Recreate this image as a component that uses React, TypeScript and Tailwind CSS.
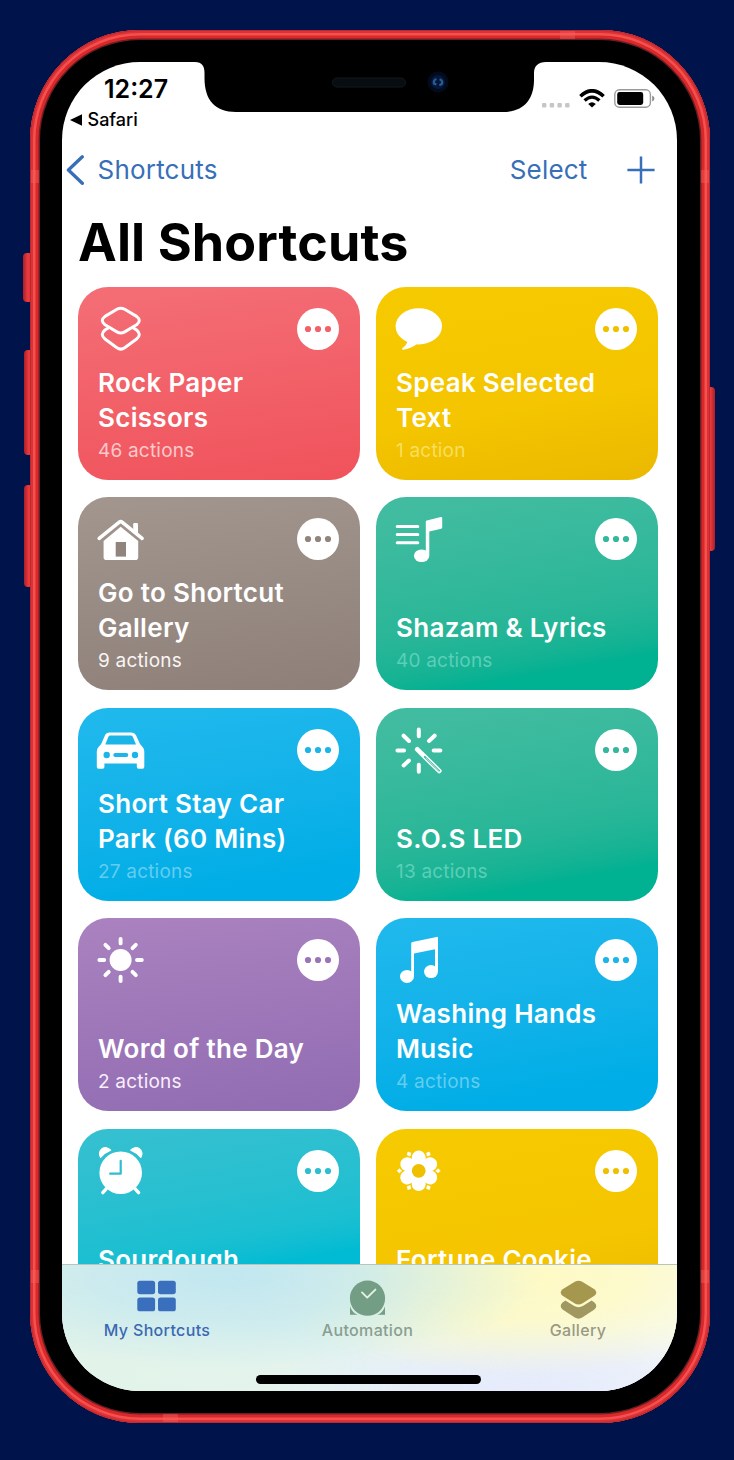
import type { ReactNode } from 'react';

type IconProps = { knockout: string };

type Shortcut = {
  title: string[];
  actions: string;
  card: string;
  muted: string;
  knockout: string;
  Icon: (props: IconProps) => ReactNode;
};

function IconBox({ children }: { children: ReactNode }) {
  return (
    <svg viewBox="0 0 48 48" className="h-12 w-12 overflow-visible" fill="none">
      {children}
    </svg>
  );
}

function LayersIcon() {
  return (
    <IconBox>
      <g stroke="white" strokeWidth="3" strokeLinejoin="round">
        <path d="M19.9 4.3Q23.8 2 27.7 4.3L39.6 11.4Q45 15.6 39.6 19.8L27.7 26.9Q23.8 29.2 19.9 26.9L8 19.8Q2.6 15.6 8 11.4Z" />
        <path d="M12 22.4L8 25Q2.6 29.3 8 34L19.9 42.8Q23.8 45.4 27.7 42.8L39.6 34Q45 29.3 39.6 25L35.6 22.4" />
      </g>
    </IconBox>
  );
}

function SpeechIcon() {
  return (
    <IconBox>
      <ellipse cx="23.8" cy="21.3" rx="23.2" ry="18.1" fill="white" />
      <path d="M12.5 36Q11.6 40.6 7.2 43.2Q6.6 45 8.8 44.7Q16.5 43.4 22 39Z" fill="white" />
    </IconBox>
  );
}

function HouseIcon({ knockout }: IconProps) {
  return (
    <IconBox>
      <path d="M36.2 9.2Q36.2 8 37.4 8H39.8Q41 8 41 9.2V19.5L36.2 15.6Z" fill="white" />
      <path d="M2.2 23.4L22 7.4Q23.7 6 25.4 7.4L45.1 23.4" stroke="white" strokeWidth="3.6" strokeLinecap="round" />
      <path d="M23.7 11.8L41.2 25.9V42.2Q41.2 45 38.4 45H9.4Q6.6 45 6.6 42.2V25.9Z" fill="white" />
      <rect x="18.7" y="27" width="10.3" height="14.6" fill={knockout} />
    </IconBox>
  );
}

function PlaylistIcon() {
  return (
    <IconBox>
      <path d="M2.2 11.5H22.8M2.2 19.6H22.8M2.2 27.7H22.8" stroke="white" strokeWidth="3" strokeLinecap="round" />
      <ellipse cx="26.6" cy="40.7" rx="7.7" ry="6.3" fill="white" />
      <path d="M30.8 6.6Q30.8 5.6 31.8 5.4L45.8 2.1Q47.2 1.8 47.2 3V12.4Q47.2 13.4 46.2 13.7L34.3 16.4V40.5H30.8Z" fill="white" />
    </IconBox>
  );
}

function CarIcon({ knockout }: IconProps) {
  return (
    <IconBox>
      <path
        d="M4.2 18L8 9.3Q9.3 6.5 12.5 6.5H34.5Q37.7 6.5 39 9.3L43 18L45.8 21.2Q47.3 23 47.3 25.4V41Q47.3 42.8 45.5 42.8H41.6Q39.8 42.8 39.8 41V37.6H7.4V41Q7.4 42.8 5.6 42.8H1.6Q-.2 42.8 -.2 41V25.4Q-.2 23 1.3 21.2Z"
        fill="white"
      />
      <path d="M8.3 18.5L11.3 11Q11.9 9.6 13.4 9.6H33.8Q35.3 9.6 35.9 11L39 18.5Z" fill={knockout} />
      <circle cx="9.7" cy="29" r="3.2" fill={knockout} />
      <circle cx="38" cy="29" r="3.2" fill={knockout} />
      <rect x="16.3" y="27" width="15" height="4.1" rx="2" fill={knockout} />
    </IconBox>
  );
}

function WandIcon({ knockout }: IconProps) {
  return (
    <IconBox>
      <path
        d="M23.8 3.4V10.2M23.8 38.8V45.8M2.4 24.6H9M38.6 24.6H45.4M8.6 9.7L14 15M39.6 9.7L34 15M8.6 39.4L14 34.5"
        stroke="white"
        strokeWidth="4"
        strokeLinecap="round"
      />
      <path d="M22.3 23.4L44.2 44.9" stroke="white" strokeWidth="4.8" strokeLinecap="round" />
      <path d="M29.8 30.8L44 44.7" stroke={knockout} strokeWidth="1.8" strokeLinecap="round" />
      <path d="M31 32L43.6 44.3" stroke="white" strokeWidth=".6" strokeLinecap="round" />
    </IconBox>
  );
}

function SunIcon() {
  return (
    <IconBox>
      <circle cx="23.6" cy="24" r="11" fill="white" />
      <path
        d="M23.6 2.9V7.4M23.6 40.6V45.1M2.4 24H7.2M40 24H44.8M8.4 8.9L11.7 12.2M38.8 8.9L35.5 12.2M8.4 39.1L11.7 35.8M38.8 39.1L35.5 35.8"
        stroke="white"
        strokeWidth="3.9"
        strokeLinecap="round"
      />
    </IconBox>
  );
}

function NotesIcon() {
  return (
    <IconBox>
      <ellipse cx="12" cy="40.4" rx="7" ry="6.5" fill="white" />
      <ellipse cx="36" cy="35.6" rx="7" ry="6.5" fill="white" />
      <path d="M16.2 7.6Q16.2 6.4 17.4 6.1L41.6 .9Q43 .6 43 2V35.6H40V13.2L19 17.6V40.4H16.2Z" fill="white" />
    </IconBox>
  );
}

function AlarmIcon({ knockout }: IconProps) {
  return (
    <IconBox>
      <path d="M9.2 41.8L5.8 45.6M38.2 41.8L41.6 45.6" stroke="white" strokeWidth="3.4" strokeLinecap="round" />
      <circle cx="23.7" cy="25.7" r="21.3" fill="white" />
      <path d="M3.6 10.4A6.1 6.1 0 0 1 13.6 3.2Q7.8 5.4 3.6 10.4Z" fill="white" stroke="white" strokeWidth="1.2" strokeLinejoin="round" />
      <path d="M43.8 10.4A6.1 6.1 0 0 0 33.8 3.2Q39.6 5.4 43.8 10.4Z" fill="white" stroke="white" strokeWidth="1.2" strokeLinejoin="round" />
      <path d="M23.7 13.8V26.7H13.2" stroke={knockout} strokeWidth="2.2" strokeLinecap="round" strokeLinejoin="round" />
    </IconBox>
  );
}

const PETAL_ANGLES = [0, 60, 120, 180, 240, 300];

function FlowerIcon({ knockout }: IconProps) {
  return (
    <IconBox>
      <g fill="white" transform="translate(23.7 23.8)">
        <circle r="13" />
        {PETAL_ANGLES.map((angle) => (
          <g key={angle} transform={`rotate(${angle})`}>
            <ellipse cy="-13" rx="7" ry="7.3" />
            <path d="M-21.6 0L-19.4 -2.1L-17 0L-19.4 2.1Z" stroke="white" strokeWidth=".6" strokeLinejoin="round" />
          </g>
        ))}
      </g>
      <circle cx="23.7" cy="23.8" r="6.9" fill={knockout} />
    </IconBox>
  );
}

const RED = 'bg-linear-172 from-[#f46e76] to-[#f0525b]';
const YELLOW = 'bg-linear-170 from-[#f6ca00] via-[#f4c500] via-60% to-[#ebb800]';
const TAUPE = 'bg-linear-172 from-[#a2968f] to-[#8e8079]';
const GREEN = 'bg-linear-170 from-[#42bca1] from-5% via-[#29b698] via-60% to-[#00b192] to-85%';
const BLUE = 'bg-linear-170 from-[#20b9ed] to-[#00ade6] to-85%';
const PURPLE = 'bg-linear-172 from-[#aa82bf] to-[#916cb2]';
const TEAL = 'bg-linear-170 from-[#36c0d0] via-[#1bbfd1] via-55% to-[#00bbd3] to-70%';

const shortcuts: Shortcut[] = [
  { title: ['Rock Paper', 'Scissors'], actions: '46 actions', card: RED, muted: 'text-[#fcc9cb]', knockout: '#f26069', Icon: LayersIcon },
  { title: ['Speak Selected', 'Text'], actions: '1 action', card: YELLOW, muted: 'text-[#f8df5e]', knockout: '#f0c000', Icon: SpeechIcon },
  { title: ['Go to Shortcut', 'Gallery'], actions: '9 actions', card: TAUPE, muted: 'text-[#f8f5f3]', knockout: '#91847d', Icon: HouseIcon },
  { title: ['Shazam & Lyrics'], actions: '40 actions', card: GREEN, muted: 'text-[#5bcfb8]', knockout: '#35b79b', Icon: PlaylistIcon },
  { title: ['Short Stay Car', 'Park (60 Mins)'], actions: '27 actions', card: BLUE, muted: 'text-[#62cdf0]', knockout: '#1cb5e8', Icon: CarIcon },
  { title: ['S.O.S LED'], actions: '13 actions', card: GREEN, muted: 'text-[#5bcfb8]', knockout: '#35b79b', Icon: WandIcon },
  { title: ['Word of the Day'], actions: '2 actions', card: PURPLE, muted: 'text-[#f9effc]', knockout: '#9b74b6', Icon: SunIcon },
  { title: ['Washing Hands', 'Music'], actions: '4 actions', card: BLUE, muted: 'text-[#62cdf0]', knockout: '#1cb5e8', Icon: NotesIcon },
  { title: ['Sourdough'], actions: '', card: TEAL, muted: 'text-white', knockout: '#2dbed0', Icon: AlarmIcon },
  { title: ['Fortune Cookie'], actions: '', card: YELLOW, muted: 'text-white', knockout: '#efc000', Icon: FlowerIcon },
];

function ShortcutCard({ shortcut }: { shortcut: Shortcut }) {
  const { title, actions, card, muted, knockout, Icon } = shortcut;

  return (
    <div className={`flex h-[192.8px] flex-col justify-between rounded-[30px] pt-[17.8px] pb-[17px] pl-[19px] ${card}`}>
      <div className="flex items-center justify-between pr-[21px]">
        <Icon knockout={knockout} />
        <svg viewBox="0 0 42 42" className="size-[42px]">
          <circle cx="21" cy="21" r="21" fill="white" />
          <g fill={knockout}>
            <circle cx="11" cy="21" r="3.1" />
            <circle cx="21" cy="21" r="3.1" />
            <circle cx="31" cy="21" r="3.1" />
          </g>
        </svg>
      </div>
      <div className="pl-px">
        <div className="text-[26px] leading-[35px] font-semibold tracking-[0.3px] whitespace-nowrap text-white">
          {title.map((line) => (
            <div key={line}>{line}</div>
          ))}
        </div>
        <div className={`mt-[3.7px] h-6 text-[19px] leading-6 tracking-[0.2px] ${muted}`}>{actions}</div>
      </div>
    </div>
  );
}

function StatusBar() {
  return (
    <div className="flex h-[72px] shrink-0 justify-between">
      <div className="pt-[15px] pl-2">
        <div className="pl-[34.5px] text-[25px] leading-6 font-semibold">12:27</div>
        <div className="mt-[9px] flex items-center gap-[6px] text-lg leading-5 font-medium">
          <svg viewBox="0 0 12 12" className="size-3">
            <path d="M0 6L12 .2V11.8Z" fill="black" />
          </svg>
          Safari
        </div>
      </div>
      <div className="mt-[27px] flex h-[19px] items-center pr-[22.5px]">
        <svg viewBox="0 0 28 5" className="mt-[14px] h-[5px] w-7" fill="#c6c6c8">
          <rect x="0" width="4.4" height="4.6" rx="1" />
          <rect x="7.7" width="4.4" height="4.6" rx="1" />
          <rect x="15.4" width="4.4" height="4.6" rx="1" />
          <rect x="23.1" width="4.4" height="4.6" rx="1" />
        </svg>
        <svg viewBox="0 0 26 19" className="ml-[9px] h-[19px] w-[26px]" fill="none" stroke="black">
          <path d="M1.4 7.2Q13 -3.6 24.6 7.2" strokeWidth="3.6" />
          <path d="M5.6 11.4Q13 4.8 20.4 11.4" strokeWidth="3.3" />
          <path d="M13 18.6L9.2 15Q13 11.6 16.8 15Z" fill="black" stroke="none" />
        </svg>
        <svg viewBox="0 0 41 19" className="ml-[9px] h-[19px] w-[41px]">
          <rect x=".8" y=".8" width="35.6" height="17.4" rx="4.6" fill="none" stroke="#9b9b9d" strokeWidth="1.4" />
          <rect x="3.2" y="3.1" width="26" height="12.8" rx="2.4" fill="black" />
          <path d="M38.2 6.4Q40.4 7.4 40.4 9.5Q40.4 11.6 38.2 12.6Z" fill="#8b8b8d" />
        </svg>
      </div>
    </div>
  );
}

function NavBar() {
  return (
    <div className="flex h-[71px] shrink-0 items-center pr-[22.5px] pl-[4.5px] text-[26px] tracking-[0.2px] text-[#386fb9]">
      <svg viewBox="0 0 18 30" className="h-[30px] w-[18px]" fill="none" stroke="currentColor">
        <path d="M16.3 1.8L2.4 15L16.3 28.3" strokeWidth="3.3" strokeLinecap="round" strokeLinejoin="round" />
      </svg>
      <span className="ml-[13.5px]">Shortcuts</span>
      <span className="ml-auto">Select</span>
      <svg viewBox="0 0 28 28" className="ml-[39px] size-7" fill="none" stroke="currentColor">
        <path d="M14 .6V27.4M.4 14H27.6" strokeWidth="2.5" />
      </svg>
    </div>
  );
}

function TabBar() {
  return (
    <div className="relative flex h-[127px] shrink-0 justify-between border-t border-[#b9c4bc] bg-[radial-gradient(ellipse_310px_90px_at_28%_10%,#c2e7f0_0%,#c2e7f0b0_45%,#c2e7f000_100%),radial-gradient(ellipse_270px_100px_at_74%_8%,#fffac4_0%,#fffac4d0_45%,#fffac400_100%),radial-gradient(ellipse_260px_75px_at_76%_100%,#e6ebfd_0%,#e6ebfdb0_50%,#e6ebfd00_100%),linear-gradient(90deg,#e2f3e9,#e4f4ee_50%,#f7faf4)] pt-[15px] pr-[39px] pl-[35.5px] text-base leading-5 font-medium tracking-[0.35px]">
      <div className="flex w-[120px] flex-col items-center text-[#3a69b2]">
        <svg viewBox="0 0 39 39" className="mr-[2px] size-[39px]" fill="#3a6fbe">
          <rect x="0.3" y="0.7" width="17.8" height="13.5" rx="2.6" />
          <rect x="21" y="0.7" width="17.8" height="13.5" rx="2.6" />
          <rect x="0.3" y="17.4" width="17.8" height="13.9" rx="2.6" />
          <rect x="21" y="17.4" width="17.8" height="13.9" rx="2.6" />
        </svg>
        <span className="mt-px whitespace-nowrap">My Shortcuts</span>
      </div>
      <div className="flex w-[120px] flex-col items-center text-[#899e92]">
        <svg viewBox="0 0 39 39" className="size-[39px]" fill="#739d84">
          <path d="M2 26.5Q4 32.5 9.5 34.8H2ZM37 26.5Q35 32.5 29.5 34.8H37Z" />
          <circle cx="19.5" cy="18.2" r="17.6" />
          <path d="M14 12.4L19.2 17.6L27.4 9.6" fill="none" stroke="#e6f3e2" strokeWidth="1.9" strokeLinecap="round" strokeLinejoin="round" />
        </svg>
        <span className="mt-px">Automation</span>
      </div>
      <div className="flex w-[120px] flex-col items-center text-[#999983]">
        <svg viewBox="0 0 39 39" className="size-[39px]">
          <path d="M15.8 1.8Q19.5 -.2 23.2 1.8L35.4 9.2Q39.2 12.5 35.4 15.8L23.2 23.4Q19.5 25.6 15.8 23.4L3.6 15.8Q-.2 12.5 3.6 9.2Z" fill="#a6974e" />
          <path d="M6.4 20.4L14.8 25.8Q19.5 28.6 24.2 25.8L32.6 20.4L35.4 22.4Q39.2 26 35.4 29.6L23.2 37.6Q19.5 39.8 15.8 37.6L3.6 29.6Q-.2 26 3.6 22.4Z" fill="#a09860" />
        </svg>
        <span className="mt-px">Gallery</span>
      </div>
      <div className="absolute bottom-[7px] left-[194px] h-[9px] w-[225.5px] rounded-full bg-black" />
    </div>
  );
}

function Notch() {
  return (
    <svg viewBox="0 0 360 54" className="absolute -top-1 left-[128.5px] h-[54px] w-[360px]">
      <path
        d="M0 0V4H5C12 4 14.5 8 14.5 15V20C14.5 42 25 54 46 54H313C334 54 344 41 344 22V15C344 8 348 4 356 4H360V0Z"
        fill="black"
      />
      <rect x="142.5" y="20" width="73" height="9" rx="4.5" fill="#070d10" stroke="#15191b" strokeWidth="1" />
      <circle cx="248" cy="24" r="10.5" fill="#020a1c" />
      <circle cx="248" cy="24" r="7" fill="#06183a" />
      <path d="M246.4 21Q243 22.4 244 25.6L246.4 26.6M249.6 21.2Q253 22.4 252 25.8L249.4 27.4" stroke="#285a93" strokeWidth="2.2" fill="none" />
    </svg>
  );
}

export default function App() {
  return (
    <div className="flex h-[1460px] w-[734px] bg-[#00144b] font-['Inter',sans-serif] text-black">
      <div className="relative mt-[30px] ml-[30px] h-[1393px] w-[680px]">
        {/* side buttons */}
        <div className="absolute top-[223px] -left-[7px] h-[49px] w-2.5 rounded-l-sm bg-linear-to-r from-[#a91f2c] via-[#ef3c3e] to-[#c5262c]" />
        <div className="absolute top-[320px] -left-[6px] h-[105px] w-2.5 rounded-l-sm bg-linear-to-r from-[#a91f2c] via-[#ef3c3e] to-[#c5262c]" />
        <div className="absolute top-[455px] -left-[6px] h-[102px] w-2.5 rounded-l-sm bg-linear-to-r from-[#a91f2c] via-[#ef3c3e] to-[#c5262c]" />
        <div className="absolute top-[357px] -right-[5px] h-[164px] w-2.5 rounded-r-sm bg-linear-to-l from-[#a91f2c] via-[#ef3c3e] to-[#c5262c]" />

        <div className="relative h-full w-full rounded-[110px] bg-black px-[31.5px] pt-8 shadow-[inset_0_0_0_1px_#b92930,inset_0_0_0_3px_#dc3236,inset_0_0_0_5.5px_#f4504e,inset_0_0_0_8.5px_#d9282b,inset_0_0_0_10px_#6c1f22]">
          {/* antenna bands */}
          <div className="absolute top-[140px] left-px h-[13px] w-2 bg-[#f4615f]/40" />
          <div className="absolute top-[140px] right-px h-[13px] w-2 bg-[#f4615f]/40" />
          <div className="absolute top-[1240px] left-px h-[13px] w-2 bg-[#f4615f]/40" />
          <div className="absolute top-[1240px] right-px h-[13px] w-2 bg-[#f4615f]/40" />
          <div className="absolute top-px left-[530px] h-2 w-[15px] bg-[#f4615f]/40" />
          <div className="absolute bottom-px left-[133px] h-2 w-[15px] bg-[#f4615f]/40" />

          <div className="relative flex h-[1329px] w-[615.5px] flex-col overflow-hidden rounded-[78px] bg-white">
            <StatusBar />
            <NavBar />
            <h1 className="flex h-[74px] shrink-0 items-center pt-0.5 pl-[16.5px] text-[52px] font-bold tracking-[0.1px]">
              All Shortcuts
            </h1>
            <div className="mt-[7.8px] grid min-h-0 flex-1 grid-cols-[281.5px_281.5px] content-start gap-x-[16.5px] gap-y-[17.7px] overflow-hidden pl-[16.5px]">
              {shortcuts.map((shortcut) => (
                <ShortcutCard key={shortcut.title[0]} shortcut={shortcut} />
              ))}
            </div>
            <TabBar />
            <Notch />
          </div>
        </div>
      </div>
    </div>
  );
}
